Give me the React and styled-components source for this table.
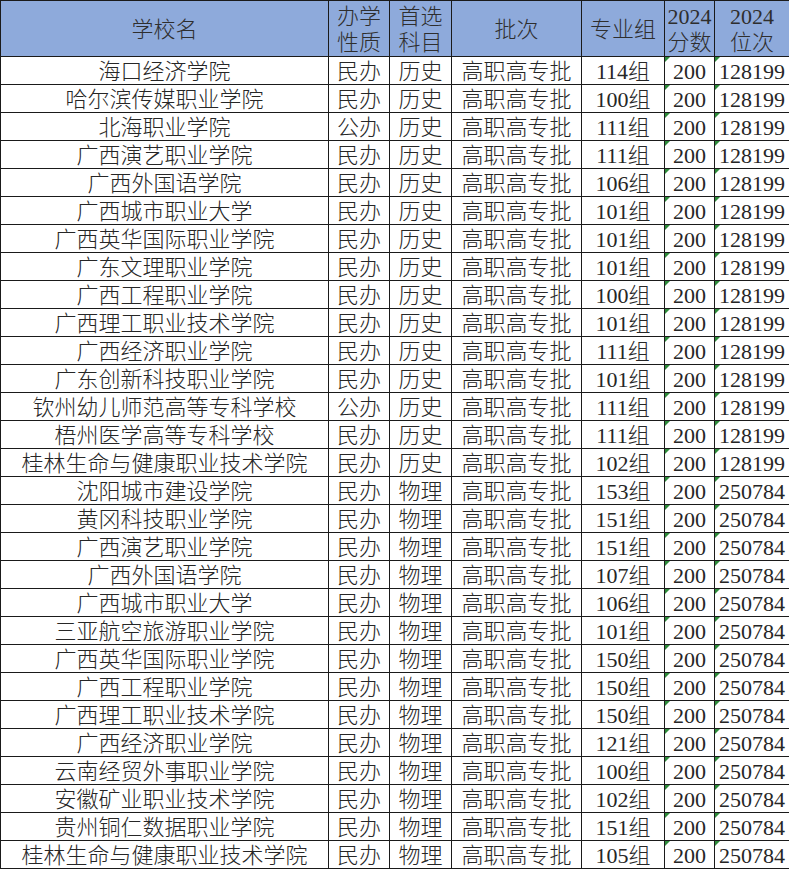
import styled, { createGlobalStyle } from 'styled-components';

const GlobalStyle = createGlobalStyle`
  html, body {
    margin: 0;
    padding: 0;
    background: #ffffff;
  }
`;

const history = [
  ['海口经济学院', '民办', '114组'],
  ['哈尔滨传媒职业学院', '民办', '100组'],
  ['北海职业学院', '公办', '111组'],
  ['广西演艺职业学院', '民办', '111组'],
  ['广西外国语学院', '民办', '106组'],
  ['广西城市职业大学', '民办', '101组'],
  ['广西英华国际职业学院', '民办', '101组'],
  ['广东文理职业学院', '民办', '101组'],
  ['广西工程职业学院', '民办', '100组'],
  ['广西理工职业技术学院', '民办', '101组'],
  ['广西经济职业学院', '民办', '111组'],
  ['广东创新科技职业学院', '民办', '101组'],
  ['钦州幼儿师范高等专科学校', '公办', '111组'],
  ['梧州医学高等专科学校', '民办', '111组'],
  ['桂林生命与健康职业技术学院', '民办', '102组'],
];

const physics = [
  ['沈阳城市建设学院', '民办', '153组'],
  ['黄冈科技职业学院', '民办', '151组'],
  ['广西演艺职业学院', '民办', '151组'],
  ['广西外国语学院', '民办', '107组'],
  ['广西城市职业大学', '民办', '106组'],
  ['三亚航空旅游职业学院', '民办', '101组'],
  ['广西英华国际职业学院', '民办', '150组'],
  ['广西工程职业学院', '民办', '150组'],
  ['广西理工职业技术学院', '民办', '150组'],
  ['广西经济职业学院', '民办', '121组'],
  ['云南经贸外事职业学院', '民办', '100组'],
  ['安徽矿业职业技术学院', '民办', '102组'],
  ['贵州铜仁数据职业学院', '民办', '151组'],
  ['桂林生命与健康职业技术学院', '民办', '105组'],
];

const rows = [
  ...history.map(([name, type, group]) => ({ name, type, subject: '历史', group, score: '200', rank: '128199' })),
  ...physics.map(([name, type, group]) => ({ name, type, subject: '物理', group, score: '200', rank: '250784' })),
];

const widths = [328, 61, 62, 130, 83, 50, 75];

function App() {
  return (
    <>
      <GlobalStyle />
      <Sheet>
        <colgroup>
          {widths.map((w, i) => <col key={i} style={{ width: w }} />)}
        </colgroup>
        <thead>
          <HeadRow>
            <Head>学校名</Head>
            <Head>办学<br />性质</Head>
            <Head>首选<br />科目</Head>
            <Head>批次</Head>
            <Head>专业组</Head>
            <Head>2024<br />分数</Head>
            <Head>2024<br />位次</Head>
          </HeadRow>
        </thead>
        <tbody>
          {rows.map((r, i) => (
            <Row key={i}>
              <Cell>{r.name}</Cell>
              <Cell>{r.type}</Cell>
              <Cell>{r.subject}</Cell>
              <Cell>高职高专批</Cell>
              <Cell>{r.group}</Cell>
              <Cell $flag>{r.score}</Cell>
              <Cell $flag>{r.rank}</Cell>
            </Row>
          ))}
        </tbody>
      </Sheet>
    </>
  );
}

export default App;

const Sheet = styled.table`
  border-collapse: collapse;
  table-layout: fixed;
  width: 788px;
  font-family: 'Liberation Serif', 'Noto Sans CJK SC', serif;
  font-size: 22px;
  font-weight: 300;
  color: #262626;
`;

const HeadRow = styled.tr`
  height: 56px;
  background: #8eaadb;
`;

const Head = styled.th`
  border: 1px solid #1a1a1a;
  padding: 2px 0 0;
  font-weight: 300;
  line-height: 26px;
  color: #2e2e2e;
  text-align: center;
  vertical-align: middle;
`;

const Row = styled.tr`
  height: 28px;
`;

const Cell = styled.td`
  position: relative;
  border: 1px solid #1a1a1a;
  padding: 3px 0 0;
  height: 24px;
  line-height: 24px;
  text-align: center;
  white-space: nowrap;
  overflow: hidden;

  &::before {
    content: '';
    display: ${p => (p.$flag ? 'block' : 'none')};
    position: absolute;
    left: 0;
    top: 0;
    width: 0;
    height: 0;
    border-top: 5px solid #2e8b3a;
    border-right: 5px solid transparent;
  }
`;
